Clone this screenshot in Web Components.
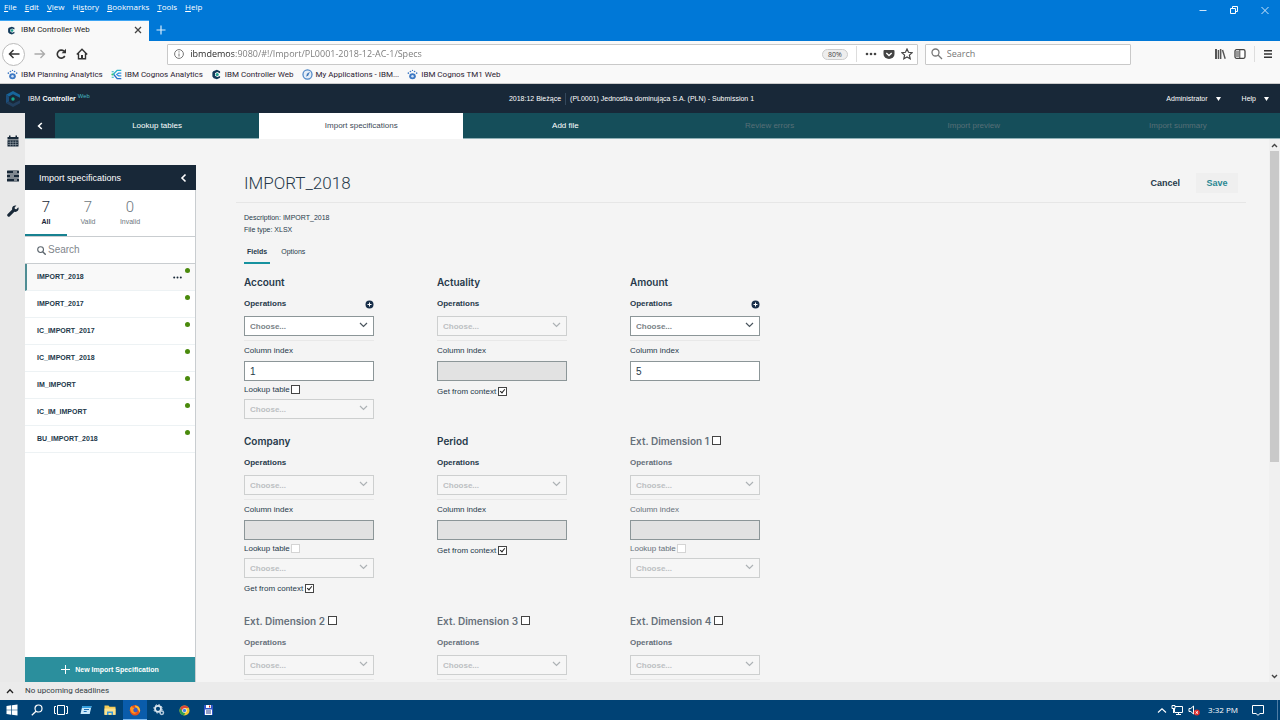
<!DOCTYPE html>
<html lang="en">
<head>
<meta charset="utf-8">
<title>IBM Controller Web</title>
<style>
  html, body { margin: 0; height: 100%; }
  body {
    display: flex; flex-direction: column; overflow: hidden;
    font: 8px/12px "Liberation Sans", Arial, sans-serif;
    color: #26394a; background: #f4f4f4;
    --ui: "Open Sans", "Noto Sans", sans-serif;
    --navy: #182838; --teal: #154e5a; --accent: #178291;
  }
  .app { flex: 1; min-height: 0; display: flex; }
  .work { flex: 1; min-width: 0; display: flex; flex-direction: column; }
  .panes { flex: 1; min-height: 0; display: flex; }
</style>
</head>
<body>
  <browser-tabs></browser-tabs>
  <browser-toolbar></browser-toolbar>
  <bookmark-bar>
    <bookmark-link icon="paw">IBM Planning Analytics</bookmark-link>
    <bookmark-link icon="cognos">IBM Cognos Analytics</bookmark-link>
    <bookmark-link icon="hex">IBM Controller Web</bookmark-link>
    <bookmark-link icon="compass">My Applications - IBM...</bookmark-link>
    <bookmark-link icon="paw">IBM Cognos TM1 Web</bookmark-link>
  </bookmark-bar>
  <app-header></app-header>
  <div class="app">
    <icon-rail></icon-rail>
    <div class="work">
      <step-nav>
        <step-tab>Lookup tables</step-tab>
        <step-tab current>Import specifications</step-tab>
        <step-tab>Add file</step-tab>
        <step-tab disabled>Review errors</step-tab>
        <step-tab disabled>Import preview</step-tab>
        <step-tab disabled>Import summary</step-tab>
      </step-nav>
      <div class="panes">
        <spec-panel>
          <spec-item selected>IMPORT_2018</spec-item>
          <spec-item>IMPORT_2017</spec-item>
          <spec-item>IC_IMPORT_2017</spec-item>
          <spec-item>IC_IMPORT_2018</spec-item>
          <spec-item>IM_IMPORT</spec-item>
          <spec-item>IC_IM_IMPORT</spec-item>
          <spec-item>BU_IMPORT_2018</spec-item>
        </spec-panel>
        <spec-detail>
          <field-card name="Account" ops value="1" lookup="open"></field-card>
          <field-card name="Actuality" context></field-card>
          <field-card name="Amount" ops value="5"></field-card>
          <field-card name="Company" lookup="locked" context></field-card>
          <field-card name="Period" context></field-card>
          <field-card name="Ext. Dimension 1" optional lookup="locked"></field-card>
          <field-card name="Ext. Dimension 2" optional brief></field-card>
          <field-card name="Ext. Dimension 3" optional brief></field-card>
          <field-card name="Ext. Dimension 4" optional brief></field-card>
        </spec-detail>
        <scroll-track></scroll-track>
      </div>
    </div>
  </div>
  <status-bar>No upcoming deadlines</status-bar>
  <task-bar></task-bar>

<script>
const RESET = `
  :host, *, *::before { box-sizing: border-box; }
  button { margin: 0; padding: 0; border: 0; background: none; color: inherit; font: inherit; display: inline-flex; align-items: center; justify-content: center; }
  a { color: inherit; text-decoration: none; }
  svg { display: block; flex: none; }
`;

const ICONS = {
  hex: `<path d="M8.6 1.2 3.2 3.1 2 5v6l2 2.4L8.6 15l4.6-2.2v-2.6l-4 1.6-3.4-1.9V6.2L9 4.4l4.2 1.6V3.2z" fill="#12395a"/><circle cx="9" cy="8" r="2.3" fill="#1fa391"/>`,
  paw: `<ellipse cx="8" cy="10.6" rx="4.8" ry="4.4" fill="#3d79c4"/><circle cx="8" cy="10.6" r="1.8" fill="#cfe0f5"/><g fill="#3d79c4"><circle cx="2" cy="6" r="1.2"/><circle cx="5" cy="3.6" r="1.2"/><circle cx="11" cy="3.6" r="1.2"/><circle cx="14" cy="6" r="1.2"/><circle cx="8" cy="2" r=".9"/></g>`,
  cognos: `<g fill="none" stroke-width="2"><path d="M15 2H9L3 8" stroke="#26b3c8"/><path d="M15 6h-4L8.500 8 11 10h4" stroke="#2f8fe0"/><path d="M4 8l5 6h6" stroke="#2a72c8"/></g><circle cx="2" cy="8" r="1.500" fill="#35c86f"/><path d="M1 4h3M1 12h3" stroke="#26b3c8" stroke-width="1.500"/>`,
  compass: `<circle cx="8" cy="8" r="6.600" fill="#e4edf7" stroke="#4d86c6" stroke-width="1.800"/><path d="M11.600 4 9.200 9.200 6 11.400 7.200 7z" fill="#3f77b8"/>`
};
const icon = (name, size) => `<svg width="${size}" height="${size}" viewBox="0 0 16 16" aria-hidden="true">${ICONS[name]}</svg>`;

function define(name, css, html) {
  customElements.define(name, class extends HTMLElement {
    connectedCallback() {
      if (this.shadowRoot) return;
      const root = this.attachShadow({ mode: "open" });
      root.innerHTML = `<style>${RESET}${css}</style>` + (typeof html === "function" ? html(this) : html);
    }
  });
}

define("browser-tabs", `
  :host { display: block; background: #0078d7; color: #fff; font-family: var(--ui); }
  .top { display: flex; height: 20px; justify-content: space-between; }
  nav { display: flex; gap: 8px; padding: 1px 4px 0; height: 12px; }
  nav u { text-underline-offset: 1px; }
  .win { display: flex; gap: 21px; align-items: center; padding: 0 10px; }
  .tabs { display: flex; height: 21px; }
  .tab { display: flex; align-items: center; gap: 5px; width: 149px; padding: 0 7px 2px; background: #f9f9f9; color: #222; border-top: 1px solid #3da5f4; font-family: Roboto, sans-serif; }
  .tab span { flex: 1; }
  .add { width: 23px; padding-bottom: 2px; }
`, `
  <div class="top">
    <nav><button><u>F</u>ile</button><button><u>E</u>dit</button><button><u>V</u>iew</button><button>Hi<u>s</u>tory</button><button><u>B</u>ookmarks</button><button><u>T</u>ools</button><button><u>H</u>elp</button></nav>
    <div class="win">
      <button aria-label="Minimize"><svg width="10" height="10"><path d="M1.500 5.500h7" stroke="#cfe6fa"/></svg></button>
      <button aria-label="Restore"><svg width="10" height="10" fill="none" stroke="#fff"><path d="M1.500 3.500h5v5h-5zM3.500 3.500v-2h5v5h-2"/></svg></button>
      <button aria-label="Close"><svg width="10" height="10" stroke="#cfe6fa"><path d="M1.500 2l7 7M8.500 2l-7 7"/></svg></button>
    </div>
  </div>
  <div class="tabs">
    <div class="tab">${icon("hex", 9)}<span>IBM Controller Web</span><button aria-label="Close tab"><svg width="8" height="8" stroke="#444" stroke-width="1.300"><path d="M1 1l6 6M7 1L1 7"/></svg></button></div>
    <button class="add" aria-label="New tab"><svg width="10" height="10" stroke="#d8ecfc" stroke-width="1.200"><path d="M5 .5v9M.5 5h9"/></svg></button>
  </div>
`);

define("browser-toolbar", `
  :host { display: flex; align-items: center; height: 26px; background: #f9f9f9; padding: 0 7px 0 2px; font-family: var(--ui); color: #444; }
  .nav { display: flex; align-items: center; gap: 9px; }
  .back { width: 23px; height: 23px; border: 1px solid #bbb; border-radius: 50%; background: #fff; }
  .gap { flex: 81 0 0; }
  .gap.right { flex-grow: 85; }
  .url { flex: 754 0 0; min-width: 0; display: flex; align-items: center; height: 21px; border: 1px solid #c9c9c9; border-radius: 1px; background: #fff; padding: 0 4px 0 6px; gap: 6px; }
  .find { flex: 198 0 0; min-width: 0; display: flex; align-items: center; height: 21px; border: 1px solid #c9c9c9; border-radius: 1px; background: #fff; padding: 0 5px; gap: 4px; margin-left: 7px; }
  input { flex: 1; min-width: 0; border: 0; padding: 0; outline: 0; background: none; font: 9px/14px var(--ui); color: #777; }
  .url input { color: transparent; background: linear-gradient(90deg, #222 44px, #777 44px); background-clip: text; -webkit-background-clip: text; }
  input::placeholder { color: #777; opacity: 1; }
  .zoom { width: 26px; height: 11px; border: 1px solid #ccc; border-radius: 6px; background: #eee; font-size: 7px; line-height: 9px; }
  i { width: 1px; height: 16px; background: #ddd; margin: 0 2px; }
  .tools { display: flex; align-items: center; gap: 8px; }
  .tools i { margin: 0; }
`, `
  <div class="nav">
    <button class="back" aria-label="Back"><svg width="12" height="12" fill="none" stroke="#333" stroke-width="1.500"><path d="M11.500 6h-10M5.500 2L1.500 6l4 4"/></svg></button>
    <button aria-label="Forward"><svg width="12" height="12" fill="none" stroke="#aaa" stroke-width="1.300"><path d="M.5 6h10M6.500 2l4 4-4 4"/></svg></button>
    <button aria-label="Reload"><svg width="12" height="12" fill="none" stroke="#333" stroke-width="1.600"><path d="M9.800 8A4 4 0 1 1 9 3.200"/><path d="M11 .8v4.400H6.600z" fill="#333" stroke="none"/></svg></button>
    <button aria-label="Home"><svg width="12" height="12" fill="none" stroke="#333" stroke-width="1.400"><path d="M.8 6.500L6 1.300l5.200 5.200M2.500 5.500v5.200h7V5.500"/><path d="M6 7v4" stroke-width="2"/></svg></button>
  </div>
  <div class="gap"></div>
  <div class="url">
    <svg width="10" height="10" fill="none" stroke="#777"><circle cx="5" cy="5" r="4.400"/><path d="M5 4.500v3M5 2.300v1.200"/></svg>
    <input aria-label="Address" value="ibmdemos:9080/#!/Import/PL0001-2018-12-AC-1/Specs">
    <button class="zoom">80%</button><i></i>
    <button aria-label="Page actions"><svg width="12" height="10" fill="#444"><circle cx="2" cy="5" r="1.300"/><circle cx="6" cy="5" r="1.300"/><circle cx="10" cy="5" r="1.300"/></svg></button>
    <button aria-label="Save to Pocket"><svg width="12" height="11"><path d="M1.500 1h9q1 0 1 1v3a5.500 5 0 0 1-11 0V2q0-1 1-1z" fill="#444"/><path d="M3.300 4L6 6.500 8.700 4" fill="none" stroke="#fff" stroke-width="1.400"/></svg></button>
    <button aria-label="Bookmark"><svg width="12" height="12" viewBox="0 0 12 12"><path d="M6 1l1.500 3.300 3.600.4-2.700 2.400.8 3.600L6 8.900l-3.200 1.800.8-3.600L.9 4.700l3.600-.4z" fill="none" stroke="#444" stroke-width="1.200"/></svg></button>
  </div>
  <div class="find">
    <svg width="12" height="12" fill="none" stroke="#777" stroke-width="1.300"><circle cx="4.500" cy="4.500" r="3.500"/><path d="M7 7l4 4"/></svg>
    <input aria-label="Web search" placeholder="Search">
  </div>
  <div class="gap right"></div>
  <div class="tools">
    <button aria-label="Library"><svg width="12" height="12"><path d="M1 1h2v10H1zM3.700 2h1.500v9H3.700zM5.900 1h1.500v10H5.900z" fill="#555"/><path d="M8.500 2l2.700 8.800" stroke="#555" stroke-width="1.400"/></svg></button>
    <button aria-label="Sidebars"><svg width="12" height="12"><rect x="1" y="1.700" width="10" height="8.600" rx="1.500" fill="#fff" stroke="#444" stroke-width="1.300"/><path d="M2 3h3v6H2z" fill="#999"/><path d="M5.800 2v8" stroke="#444"/></svg></button>
    <i></i>
    <button aria-label="Open menu"><svg width="10" height="10" stroke="#333" stroke-width="1.400"><path d="M1 1.800h8M1 5h8M1 8.200h8"/></svg></button>
  </div>
`);

define("bookmark-bar", `
  :host { display: flex; gap: 8px; height: 17px; padding: 0 7px; background: #f9f9f9; border-bottom: 1px solid #ccc; font-family: Roboto, sans-serif; color: #2a2030; }
`, `<slot></slot>`);
define("bookmark-link", `
  :host { display: block; }
  a { display: flex; align-items: center; gap: 3px; height: 15px; white-space: nowrap; }
`, el => `<a href="#">${icon(el.getAttribute("icon"), 11)}<slot></slot></a>`);

define("app-header", `
  :host { display: grid; grid-template-columns: 1fr auto 1fr; align-items: center; height: 29px; padding: 0 11px 0 5px; background: var(--navy); color: #fff; font-size: 7px; }
  .brand { display: flex; align-items: center; gap: 7px; }
  .brand sup { color: #45b9c4; line-height: 0; vertical-align: 3px; }
  .context { display: flex; gap: 4px; margin-right: 11px; }
  .context span + span { border-left: 1px solid #34485c; padding-left: 4px; }
  .user { display: flex; justify-content: flex-end; gap: 21px; }
  .user button { gap: 8px; }
`, `
  <div class="brand">
    <svg width="16" height="16" viewBox="0 0 16 16" aria-hidden="true"><path d="M8 0l7 3.800v3l-4-2L8 3.200 4 5.400 1 3.700z" fill="#17659b"/><path d="M1 3.700l3 1.700v5.200l-3 1.700z" fill="#1c4d7a"/><path d="M4 10.600L8 12.800l3-1.600 4-2v3L8 16l-7-3.700z" fill="#223f5e"/><circle cx="8" cy="8" r="1.700" fill="#14a58b"/></svg>
    <span>IBM <b>Controller</b> <sup>Web</sup></span>
  </div>
  <div class="context"><span>2018:12 Bieżące</span><span>(PL0001) Jednostka dominująca S.A. (PLN) - Submission 1</span></div>
  <div class="user">
    <button>Administrator <svg width="5" height="4" fill="#fff"><path d="M0 0h5L2.500 4z"/></svg></button>
    <button>Help <svg width="5" height="4" fill="#fff"><path d="M0 0h5L2.500 4z"/></svg></button>
  </div>
`);

define("icon-rail", `
  :host { display: flex; flex-direction: column; align-items: center; gap: 23px; width: 25px; padding-top: 22px; background: #e9e9e9; flex: none; }
`, `
  <button aria-label="Calendar"><svg width="12" height="12"><path d="M.5 2h11v2.500H.5zM2 .5h1.500V3H2zM8.500.5H10V3H8.500z" fill="#182838"/><path d="M.5 5.200h11v6.300H.5z" fill="#182838"/><path d="M1 7.300h10M1 9.500h10M3.300 5.500v6M6 5.500v6M8.700 5.500v6" stroke="#b9c0c6" stroke-width=".5"/></svg></button>
  <button aria-label="Data"><svg width="12" height="12" fill="#182838"><rect y=".5" width="12" height="3" rx=".6"/><rect y="4.500" width="12" height="3" rx=".6"/><rect y="8.500" width="12" height="3" rx=".6"/><path d="M6 2h4M3 6h4M7 10h3" stroke="#e9e9e9"/></svg></button>
  <button aria-label="Tools"><svg width="12" height="12"><path d="M11.300 2.300L9.400 4.200 7.900 3.900 7.600 2.400 9.400.6A3.300 3.300 0 0 0 5.200 4.600L.7 9.100a1.500 1.500 0 0 0 2.200 2.200L7.400 6.800A3.300 3.300 0 0 0 11.300 2.300z" fill="#182838"/></svg></button>
`);

define("step-nav", `
  :host { display: flex; height: 26px; background: var(--teal); border-bottom: 1px solid #8fb0b6; }
  button { width: 30px; background: var(--navy); flex: none; }
`, `<button aria-label="Previous step"><svg width="6" height="8" fill="none" stroke="#fff" stroke-width="1.600"><path d="M4.800 1L1.600 4l3.200 3"/></svg></button><slot></slot>`);
define("step-tab", `
  :host { display: flex; flex: 1; color: #fff; }
  :host([current]) { background: #fff; color: #3d4a56; margin-bottom: -1px; }
  :host([disabled]) { color: #586f77; }
  button { flex: 1; }
  button:disabled { color: inherit; }
`, el => `<button${el.hasAttribute("disabled") ? " disabled" : ""}><slot></slot></button>`);

define("spec-panel", `
  :host { display: flex; flex-direction: column; width: 171px; margin-top: 26px; flex: none; background: #fff; border-right: 1px solid #c9cdd0; }
  header { display: flex; align-items: center; justify-content: space-between; height: 25px; padding: 0 9px 0 14px; margin-right: -1px; background: var(--navy); color: #fff; }
  h2 { margin: 0; font: 9px/12px "Liberation Sans", sans-serif; }
  .counts { display: flex; height: 47px; border-bottom: 1px solid #c9cdd0; }
  .counts button { flex: none; width: 42px; flex-direction: column; color: #6d7780; font-size: 7px; line-height: 10px; border-bottom: 2px solid transparent; }
  .counts strong { font: 300 15px/20px Roboto, sans-serif; }
  .counts .on { border-color: var(--accent); font-weight: bold; color: #182838; }
  .search { display: flex; align-items: center; gap: 2px; height: 27px; padding: 0 12px; border-bottom: 1px solid #c9cdd0; }
  input { flex: 1; min-width: 0; border: 0; padding: 0; outline: 0; font: 10px/14px "Liberation Sans", sans-serif; background: none; }
  input::placeholder { color: #7f868c; opacity: 1; }
  .list { flex: 1; min-height: 0; }
  .new { height: 25px; gap: 5px; background: #2b8f9d; color: #fff; font-size: 7px; font-weight: bold; flex: none; }
`, `
  <header><h2>Import specifications</h2><button aria-label="Collapse panel"><svg width="7" height="10" fill="none" stroke="#fff" stroke-width="1.600"><path d="M5.500 1.500L2 5l3.500 3.500"/></svg></button></header>
  <div class="counts">
    <button class="on"><strong>7</strong>All</button>
    <button><strong>7</strong>Valid</button>
    <button><strong>0</strong>Invalid</button>
  </div>
  <div class="search"><svg width="9" height="9" fill="none" stroke="#5a646c" stroke-width="1.100"><circle cx="3.600" cy="3.600" r="2.900"/><path d="M5.700 5.700l3 3" stroke-width="1.400"/></svg><input aria-label="Search specifications" placeholder="Search"></div>
  <div class="list"><slot></slot></div>
  <button class="new"><svg width="9" height="9" stroke="#fff"><path d="M4.500 0v9M0 4.500h9"/></svg>New Import Specification</button>
`);
define("spec-item", `
  :host { display: block; font-size: 7px; font-weight: bold; color: #22384a; border-bottom: 1px solid #edf2f4; }
  a { position: relative; display: flex; align-items: center; height: 26px; padding: 0 13px 0 12px; }
  .name { flex: 1; }
  i { position: absolute; right: 5px; top: 4px; width: 5px; height: 5px; border-radius: 50%; background: #4a8a0c; }
  :host([selected]) { background: #f9f9f9; border-left: 2px solid #4f8d94; }
  :host([selected]) a { padding-left: 10px; }
`, el => `<a href="#"><span class="name"><slot></slot></span>${el.hasAttribute("selected") ? `<svg width="9" height="3" fill="#182838"><circle cx="1.200" cy="1.500" r="1"/><circle cx="4.500" cy="1.500" r="1"/><circle cx="7.800" cy="1.500" r="1"/></svg>` : ""}<i></i></a>`);

define("spec-detail", `
  :host { display: block; flex: 1; min-width: 0; overflow: hidden; padding: 31px 23px 0 40px; }
  header { display: flex; align-items: center; height: 33px; padding: 0 8px 6px; border-bottom: 1px solid #e6e6e6; }
  h1 { flex: 1; margin: 0; font: 300 17px/20px Roboto, sans-serif; }
  .cancel, .save { font-size: 9px; font-weight: bold; }
  .save { width: 42px; height: 20px; margin-left: 16px; background: #efefef; color: #2b8793; }
  .body { padding: 9px 8px 0; }
  p { margin: 0; font-size: 7px; }
  .tabs { display: flex; margin: 6px 0 10px; }
  .tabs button { height: 22px; padding: 0 3px; font-size: 7px; border-bottom: 2px solid transparent; margin-right: 8px; }
  .tabs .on { font-weight: bold; border-color: #16929f; }
  .grid { display: grid; grid-template-columns: repeat(auto-fill, 130px); gap: 14px 63px; max-width: 540px; }
`, `
  <header><h1>IMPORT_2018</h1><button class="cancel">Cancel</button><button class="save">Save</button></header>
  <div class="body">
    <p>Description: IMPORT_2018</p>
    <p>File type: XLSX</p>
    <div class="tabs"><button class="on">Fields</button><button>Options</button></div>
    <div class="grid"><slot></slot></div>
  </div>
`);

const picker = (label, off) => `
  <div class="pick"><select aria-label="${label}"${off ? " disabled" : ""}><option>Choose...</option></select>
  <svg width="9" height="6" fill="none" stroke="currentColor" stroke-width="1.200"><path d="M1 1l3.500 3.500L8 1"/></svg></div>`;
define("field-card", `
  :host { display: block; }
  :host([optional]) { color: #66707a; }
  h3 { display: flex; align-items: center; gap: 3px; margin: 0 0 8px; height: 16px; font: 600 10px/16px Inter, sans-serif; }
  .ops { display: flex; justify-content: space-between; align-items: center; height: 12px; margin-bottom: 6px; font-weight: bold; }
  .pick { display: grid; align-items: center; }
  .pick > * { grid-area: 1 / 1; }
  .pick svg { justify-self: end; margin: 0 6px 3px 0; pointer-events: none; color: #4a555e; }
  select { appearance: none; width: 100%; height: 20px; margin: 0; padding: 1px 5px 0; border: 1px solid #8c9698; border-radius: 0; background: #fff; font: bold 8px/12px "Liberation Sans", sans-serif; color: #7b8387; }
  select:disabled { background: #f6f6f6; border-color: #cdcfcf; color: #bcc0c2; opacity: 1; }
  select:disabled + svg { color: #adb2b5; }
  hr { margin: 4px 0; border: 0; border-top: 1px solid #e8e8e8; }
  .index { display: block; height: 12px; margin-bottom: 4px; }
  .text { display: block; width: 100%; height: 20px; margin: 0; padding: 0 5px; border: 1px solid #8c9698; border-radius: 0; background: #fff; font: 10px/14px "Liberation Sans", sans-serif; color: #26394a; }
  .text:disabled { background: #e2e2e2; }
  .row { display: flex; align-items: center; gap: 1px; height: 14px; margin: 2px 0; }
  .context { margin: 4px 0 0; padding-bottom: 3px; height: 17px; gap: 2px; }
  input[type=checkbox] { appearance: none; position: relative; width: 9px; height: 9px; margin: 0 0 2px; border: 1px solid #444; background: #fff; }
  input[type=checkbox]:disabled { border-color: #d4d4d4; }
  input[type=checkbox]:checked::before { content: ""; position: absolute; left: 2px; top: 0; width: 3px; height: 5px; border: solid #222; border-width: 0 1px 1px 0; transform: rotate(40deg); }
`, el => {
  const has = a => el.hasAttribute(a), name = el.getAttribute("name"), lookup = el.getAttribute("lookup");
  return `
  <h3><label for="use">${name}</label>${has("optional") ? `<input type="checkbox" id="use">` : ""}</h3>
  <div class="ops"><span>Operations</span>${has("ops") ? `<button aria-label="Add operation"><svg width="9" height="9"><circle cx="4.500" cy="4.500" r="4" fill="#182f49"/><path d="M4.500 2.500v4M2.500 4.500h4" stroke="#fff"/></svg></button>` : ""}</div>
  ${picker("Operations", !has("ops"))}
  <hr>
  ${has("brief") ? "" : `<label class="index" for="col">Column index</label>
  <input class="text" id="col" value="${el.getAttribute("value") || ""}"${has("value") ? "" : " disabled"}>`}
  ${lookup ? `<div class="row"><label for="look">Lookup table</label><input type="checkbox" id="look"${lookup === "locked" ? " disabled" : ""}></div>${picker("Lookup table", true)}` : ""}
  ${has("context") ? `<div class="row context"><label for="ctx">Get from context</label><input type="checkbox" id="ctx" checked></div>` : ""}`;
});

define("scroll-track", `
  :host { display: flex; flex-direction: column; align-items: center; width: 11px; flex: none; background: #f0f0f0; }
  svg { margin: 4px 0 3px; }
  .track { flex: 1; align-self: stretch; padding: 0 1px; }
  .thumb { height: 60%; background: #c9c9c9; }
`, `<svg width="7" height="5" fill="none" stroke="#444" stroke-width="1.400"><path d="M1 4l2.500-2.500L6 4"/></svg><div class="track"><div class="thumb"></div></div><svg width="7" height="5" fill="none" stroke="#444" stroke-width="1.400"><path d="M1 1l2.500 2.500L6 1"/></svg>`);

define("status-bar", `
  :host { display: flex; align-items: center; gap: 11px; height: 18px; padding-left: 6px; background: #ebebeb; color: #333c44; font-family: Roboto, sans-serif; }
`, `<button aria-label="Show deadlines"><svg width="8" height="6" fill="none" stroke="#222" stroke-width="1.300"><path d="M1 5l3-3.200L7 5"/></svg></button><span><slot></slot></span>`);

define("task-bar", `
  :host { display: flex; justify-content: space-between; height: 20px; background: #004275; color: #fff; font-family: var(--ui); }
  .apps { display: flex; }
  .apps button { width: 24px; margin-right: 1px; }
  .apps button:nth-child(even) { margin-right: 0; }
  .apps .on { background: #0a5cab; border-bottom: 1px solid #7db9ee; }
  .tray { display: flex; align-items: center; gap: 4px; }
  .time { margin-left: 4px; }
  .note { margin: 0 9px 0 10px; }
  .edge { width: 3px; height: 20px; border-left: 1px solid #4f7da5; }
`, `
  <div class="apps">
    <button aria-label="Start"><svg width="12" height="12" fill="#fff"><path d="M.5 2l4.800-.7v4.400H.5zM6 1.200L11.500.4v5.300H6zM.5 6.300h4.800v4.400L.5 10zM6 6.300h5.500v5.300L6 10.800z"/></svg></button>
    <button aria-label="Search"><svg width="12" height="12" fill="none" stroke="#fff" stroke-width="1.200"><circle cx="7.500" cy="4.500" r="3.500"/><path d="M5 7.200L.8 11.300"/></svg></button>
    <button aria-label="Task view"><svg width="14" height="12" fill="none" stroke="#fff"><path d="M3.500 1.500h7v9h-7zM2 2.500H.5v7H2M12 2.500h1.500v7H12"/></svg></button>
    <button aria-label="Console"><svg width="12" height="12"><path d="M2.300 2h9.200L9.700 10H.5z" fill="#c9e9fb"/><path d="M2.300 2h9.200l-.5 2H1.800z" fill="#35a0e0"/><path d="M4 5.500h5M3.700 7.500h3" stroke="#1b6eb5"/></svg></button>
    <button aria-label="File Explorer"><svg width="12" height="12"><path d="M.5 1.500h4l1 1.300h6v8H.5z" fill="#f3cc58"/><path d="M.5 4.500h11v6.300H.5z" fill="#fbe391"/><path d="M3 11V7.500h6V11H7.500V9h-3v2z" fill="#3a9bdc"/></svg></button>
    <button class="on" aria-label="Firefox"><svg width="12" height="12"><circle cx="6" cy="6.300" r="5.200" fill="#e8501c"/><path d="M6 1.500c4 0 6 4 4.800 7.200C9.800 6 8.500 5 6.500 4.500z" fill="#fbc02d"/><circle cx="6.300" cy="6" r="2.400" fill="#3b5cc4"/><path d="M1 4c1-1.500 2-2 2-2l.5 1.500 2 .5-1.200 1.500C4 8 6 9 8 8.200 6 11 1.500 10 1 4z" fill="#ff9421"/></svg></button>
    <button aria-label="Services"><svg width="12" height="12"><circle cx="5" cy="4.800" r="3" fill="none" stroke="#dbe6ef" stroke-width="1.800"/><circle cx="5" cy="4.800" r="4.200" fill="none" stroke="#dbe6ef" stroke-width="1" stroke-dasharray="1.600 1.700"/><circle cx="8.800" cy="8.800" r="1.700" fill="none" stroke="#b5cadc" stroke-width="1.500"/></svg></button>
    <button aria-label="Chrome"><svg width="11" height="11"><circle cx="5.500" cy="5.500" r="5" fill="#f6c62d"/><path d="M1.200 3A5 5 0 0 1 9.900 3H5.500L3.400 6.800z" fill="#e04435"/><path d="M1.200 3l2.500 4 2.500 1-1.200 2.500A5 5 0 0 1 1.200 3z" fill="#2f9e50"/><circle cx="5.500" cy="5.500" r="2.300" fill="#fff"/><circle cx="5.500" cy="5.500" r="1.700" fill="#3f7fe8"/></svg></button>
    <button aria-label="Commander"><svg width="11" height="12"><path d="M1 1h9v10H1z" fill="#2f57c9"/><path d="M3 1h5v3H3z" fill="#fff"/><path d="M6 1.500h1.200v2H6z" fill="#c62828"/><path d="M2 5.500h7V11H2z" fill="#fff"/><path d="M3 7h5M3 9h5" stroke="#27408f"/></svg></button>
  </div>
  <div class="tray">
    <button aria-label="Hidden icons"><svg width="10" height="7" fill="none" stroke="#fff" stroke-width="1.100"><path d="M1 5.500L5 1.800l4 3.700"/></svg></button>
    <button aria-label="Network"><svg width="13" height="12" fill="none" stroke="#fff"><path d="M4 2.500h7.500v6H3.500V5M7.500 8.500V11M5 10.500h5M1 1.500h3v3H1zM2.500 5v4"/></svg></button>
    <button aria-label="Sound muted"><svg width="12" height="12"><path d="M1 4.500h1.800L5.500 2v8L2.800 7.500H1z" fill="none" stroke="#fff"/><circle cx="8.800" cy="8.500" r="3" fill="#e02b2b"/><path d="M7.600 7.300l2.400 2.400M10 7.300L7.600 9.700" stroke="#fff"/></svg></button>
    <span class="time">3:32 PM</span>
    <button class="note" aria-label="Notifications"><svg width="12" height="12" fill="none" stroke="#fff"><path d="M.5 1.500h11v8H8L6 11.300 4 9.500H.5z"/></svg></button>
    <div class="edge"></div>
  </div>
`);
</script>
</body>
</html>
